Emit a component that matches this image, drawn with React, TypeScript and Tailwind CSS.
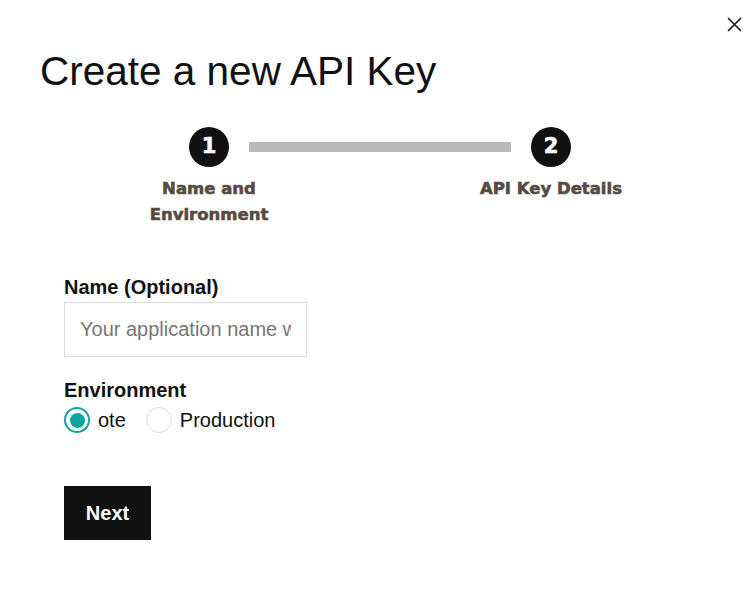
import { useState } from "react";

function Step({ n }: { n: number }) {
  return (
    <div className="flex h-10 w-10 shrink-0 items-center justify-center rounded-full bg-[#111111] text-[21px] font-bold text-white [font-family:'DejaVu_Sans',sans-serif] [-webkit-text-stroke:0.6px_#ffffff]">
      {n}
    </div>
  );
}

export default function App() {
  const [env, setEnv] = useState("ote");

  return (
    <div className="relative min-h-screen bg-white text-[#111] [font-family:'Liberation_Sans',Arial,sans-serif]">
      {/* close button */}
      <button className="absolute right-[12px] top-[16px] flex h-4 w-4 items-center justify-center" aria-label="Close">
        <svg width="15" height="15" viewBox="0 0 15 15" fill="none" stroke="#1a1a1a" strokeWidth="1.7" strokeLinecap="round">
          <path d="M1.5 1.5l12 12M13.5 1.5l-12 12" />
        </svg>
      </button>

      <div className="pl-10 pt-[47px]">
        <h1 className="text-[40.5px] leading-[48px] font-normal text-[#111]">Create a new API Key</h1>
      </div>

      {/* stepper */}
      <div className="ml-[129px] mt-[32px] w-[502px]">
        <div className="flex items-center px-[60px]">
          <Step n={1} />
          <div className="mx-5 h-[10px] flex-1 bg-[#b9b9b9]" />
          <Step n={2} />
        </div>
        <div className="mt-[9px] flex justify-between text-[16.5px] leading-[26px] font-bold text-[#574a40] [font-family:'DejaVu_Sans',sans-serif] [-webkit-text-stroke:0.6px_#574a40]">
          <div className="w-[160px] text-center">Name and Environment</div>
          <div className="w-[160px] text-center">API Key Details</div>
        </div>
      </div>

      {/* form */}
      <div className="ml-16 mt-[45px]">
        <label className="block text-[20px] leading-[28px] font-bold">Name (Optional)</label>
        <input
          className="mt-px h-[55px] w-[243px] border border-[#d6dce2] px-[15px] text-[20px] outline-none placeholder:text-[#767676]"
          placeholder="Your application name will appear here"
        />

        <div className="mt-[19px] text-[20px] leading-[28px] font-bold">Environment</div>
        <div className="mt-[2px] flex items-center text-[20px] leading-[28px]">
          {["ote", "Production"].map((opt) => (
            <label key={opt} className="mr-5 flex cursor-pointer items-center" onClick={() => setEnv(opt)}>
              <span
                className={
                  opt === env
                    ? "flex h-[26px] w-[26px] items-center justify-center rounded-full border-2 border-[#12a3a3]"
                    : "flex h-[26px] w-[26px] items-center justify-center rounded-full border border-[#d9dee3]"
                }
              >
                {opt === env && <span className="h-[15px] w-[15px] rounded-full bg-[#0ea3a3]" />}
              </span>
              <span className="ml-2">{opt}</span>
            </label>
          ))}
        </div>

        <button className="mt-[52px] h-[54px] w-[87px] bg-[#111111] text-[20px] font-bold text-white">Next</button>
      </div>
    </div>
  );
}
